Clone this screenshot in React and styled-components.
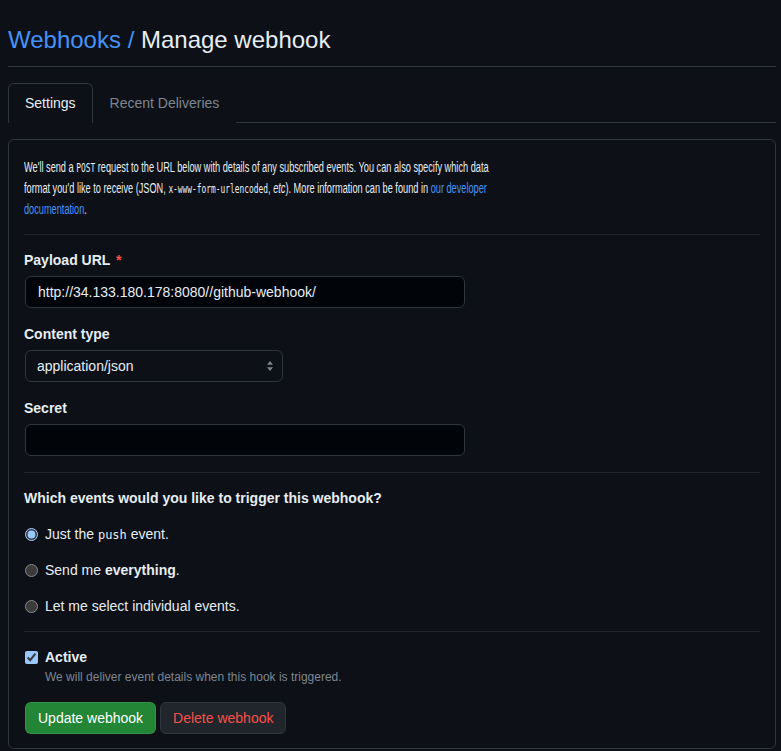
import styled, { createGlobalStyle } from 'styled-components'

const GlobalStyle = createGlobalStyle`
  html, body {
    margin: 0;
    background: #0d1117;
    color: #e6edf3;
    font-family: "Liberation Sans", Arial, sans-serif;
    font-size: 14px;
  }
`

const Page = styled.div`
  width: 768px;
  margin-left: 8px;
  padding-top: 22px;
`

const Header = styled.div`
  border-bottom: 1px solid #30363d;
  padding-bottom: 8px;
  margin-bottom: 16px;
`

const Title = styled.h1`
  margin: 0;
  font-size: 24px;
  font-weight: 400;
  line-height: 36px;
  color: #e6edf3;
  & a {
    color: #4493f8;
    text-decoration: none;
  }
`

const TabList = styled.div`
  display: flex;
  border-bottom: 1px solid #30363d;
  margin-bottom: 16px;
`

const Tab = styled.div`
  padding: 8px 16px 9px;
  line-height: 22px;
  border: 1px solid ${(p) => (p.$selected ? '#30363d' : 'transparent')};
  border-bottom: 0;
  border-radius: 6px 6px 0 0;
  margin-bottom: -1px;
  background: #0d1117;
  color: ${(p) => (p.$selected ? '#e6edf3' : '#7d8590')};
`

const Box = styled.div`
  border: 1px solid #30363d;
  border-radius: 6px;
  padding: 17px 15px 14px;
`

const Intro = styled.p`
  margin: 0;
  height: 63px;
  line-height: 21px;
  white-space: nowrap;
  transform: scaleX(0.657);
  transform-origin: left center;
  & a {
    color: #4493f8;
    text-decoration: none;
  }
`

const Code = styled.code`
  font-family: "DejaVu Sans Mono", "Liberation Mono", monospace;
  font-size: 12px;
  line-height: 1;
`

const Divider = styled.hr`
  border: 0;
  border-top: 1px solid #21262d;
  height: 0;
  margin: ${(p) => p.$top || 15}px 0 15px;
`

const Fields = styled.div`
  display: flex;
  flex-direction: column;
  gap: 16px;
`

const FormGroup = styled.div`
  display: flex;
  flex-direction: column;
`

const Label = styled.label`
  display: block;
  font-weight: 700;
  line-height: 20px;
  margin-bottom: 6px;
  color: #e6edf3;
`

const Required = styled.span`
  color: #f85149;
  margin-left: 2px;
`

const TextInput = styled.input`
  display: block;
  box-sizing: border-box;
  width: 440px;
  height: 32px;
  margin: 0 0 0 1px;
  padding: 5px 12px;
  font-family: "Liberation Sans", Arial, sans-serif;
  font-size: 14px;
  color: #e6edf3;
  background: #010409;
  border: 1px solid #30363d;
  border-radius: 6px;
  outline: none;
`

const Select = styled.select`
  display: block;
  box-sizing: border-box;
  width: 258px;
  height: 32px;
  margin-left: 1px;
  padding: 0 28px 0 11px;
  font-family: "Liberation Sans", Arial, sans-serif;
  font-size: 14px;
  color: #e6edf3;
  background-color: #0d1117;
  background-image: url("data:image/svg+xml,%3Csvg xmlns='http://www.w3.org/2000/svg' width='16' height='16' viewBox='0 0 16 16'%3E%3Cpath fill='%237d8590' d='M8 3 11 6.8H5zM8 13 5 9.2h6z'/%3E%3C/svg%3E");
  background-repeat: no-repeat;
  background-position: right 4px center;
  border: 1px solid #30363d;
  border-radius: 6px;
  appearance: none;
  outline: none;
`

const Question = styled.div`
  font-weight: 700;
  line-height: 20px;
  margin: 1px 0 16px;
`

const OptionList = styled.div`
  display: flex;
  flex-direction: column;
  gap: 16px;
`

const Option = styled.label`
  display: flex;
  align-items: center;
  gap: 7px;
  height: 20px;
  line-height: 20px;
  color: #e6edf3;
  & input {
    margin: 0 0 0 1px;
    width: 13px;
    height: 13px;
    color-scheme: dark;
  }
`

const CheckRow = styled.label`
  display: flex;
  align-items: center;
  gap: 7px;
  height: 20px;
  margin-top: 1px;
  font-weight: 700;
  line-height: 20px;
  & input {
    margin: 0 0 0 1px;
    width: 13px;
    height: 13px;
    color-scheme: dark;
  }
`

const Note = styled.p`
  margin: 1px 0 16px 21px;
  font-size: 12px;
  line-height: 18px;
  color: #7d8590;
`

const Actions = styled.div`
  display: flex;
  gap: 4px;
  margin-left: 1px;
`

const Button = styled.button`
  height: 32px;
  padding: 0 12px;
  font-family: "Liberation Sans", Arial, sans-serif;
  font-size: 14px;
  font-weight: 500;
  border-radius: 6px;
  border: 1px solid ${(p) => (p.$danger ? '#30363d' : 'rgba(240,246,252,0.1)')};
  background: ${(p) => (p.$danger ? '#21262d' : '#238636')};
  color: ${(p) => (p.$danger ? '#f85149' : '#ffffff')};
  cursor: pointer;
`

export default function App() {
  return (
    <>
      <GlobalStyle />
      <Page>
        <Header>
          <Title>
            <a href="#">Webhooks /</a> Manage webhook
          </Title>
        </Header>
        <TabList>
          <Tab $selected>Settings</Tab>
          <Tab>Recent Deliveries</Tab>
        </TabList>
        <Box>
          <Intro>
            We'll send a <Code>POST</Code> request to the URL below with details of any subscribed events. You can also specify which data
            <br />
            format you'd like to receive (JSON, <Code>x-www-form-urlencoded</Code>, <em>etc</em>). More information can be found in{' '}
            <a href="#">our developer</a>
            <br />
            <a href="#">documentation</a>.
          </Intro>
          <Divider $top={14} />
          <Fields>
            <FormGroup>
              <Label>
                Payload URL <Required>*</Required>
              </Label>
              <TextInput defaultValue="http://34.133.180.178:8080//github-webhook/" />
            </FormGroup>
            <FormGroup>
              <Label>Content type</Label>
              <Select defaultValue="json">
                <option value="json">application/json</option>
                <option value="form">application/x-www-form-urlencoded</option>
              </Select>
            </FormGroup>
            <FormGroup>
              <Label>Secret</Label>
              <TextInput type="password" />
            </FormGroup>
          </Fields>
          <Divider $top={16} />
          <Question>Which events would you like to trigger this webhook?</Question>
          <OptionList>
            <Option>
              <input type="radio" name="events" defaultChecked />
              <span>
                Just the <Code>push</Code> event.
              </span>
            </Option>
            <Option>
              <input type="radio" name="events" />
              <span>
                Send me <strong>everything</strong>.
              </span>
            </Option>
            <Option>
              <input type="radio" name="events" />
              <span>Let me select individual events.</span>
            </Option>
          </OptionList>
          <Divider />
          <CheckRow>
            <input type="checkbox" defaultChecked />
            Active
          </CheckRow>
          <Note>We will deliver event details when this hook is triggered.</Note>
          <Actions>
            <Button>Update webhook</Button>
            <Button $danger>Delete webhook</Button>
          </Actions>
        </Box>
      </Page>
    </>
  )
}
